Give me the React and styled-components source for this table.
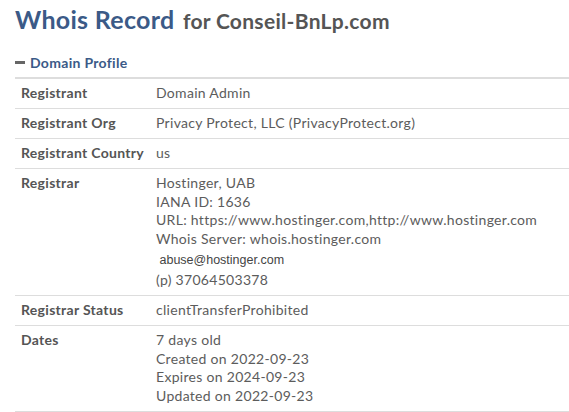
import React from 'react';
import styled, { createGlobalStyle } from 'styled-components';

const GlobalStyle = createGlobalStyle`
	body {
		margin: 0;
		background: #fff;
		font-family: Lato, "Open Sans", sans-serif;
		color: #555;
	}
`;

const Page = styled.div`
	padding: 3px 0 0 15px;
	letter-spacing: 0.3px;
`;

const Title = styled.h1`
	margin: 0;
	font-size: 25px;
	line-height: 32px;
	font-weight: 700;
	color: #3b5a87;
	white-space: nowrap;
`;

const Domain = styled.span`
	font-size: 21px;
	color: #555;
	margin-left: 2px;
`;

const SectionHead = styled.div`
	display: flex;
	align-items: center;
	gap: 5px;
	margin-top: 15px;
	height: 20px;
	font-size: 14px;
	font-weight: 700;
	color: #3b5a87;
`;

const Minus = styled.span`
	width: 10px;
	height: 3px;
	background: #666;
`;

const Table = styled.div`
	margin-top: 5px;
	border-top: 2px solid #ddd;
`;

const Row = styled.div`
	display: grid;
	grid-template-columns: 135px 1fr;
	padding: 5px 6px 5.5px;
	border-bottom: 1px solid #ddd;
	font-size: 14px;
	line-height: 18.5px;
`;

const Label = styled.div`
	font-weight: 700;
	color: #555;
`;

const Value = styled.div`
	color: #5c5c5c;
`;

const Url = styled.div`
	white-space: nowrap;
`;

const Contact = styled.div`
	font-family: "Liberation Sans", Arial, sans-serif;
	font-size: 12.5px;
	letter-spacing: 0;
	line-height: 20px;
	color: #444;
	padding-top: 2px;
`;

const Phone = styled.div`
	line-height: 19.5px;
`;

const rows = [
	{ label: 'Registrant', value: 'Domain Admin' },
	{ label: 'Registrant Org', value: 'Privacy Protect, LLC (PrivacyProtect.org)' },
	{ label: 'Registrant Country', value: 'us' },
];

const App = () => (
	<Page>
		<GlobalStyle />
		<Title>
			Whois Record <Domain>for Conseil-BnLp.com</Domain>
		</Title>
		<SectionHead>
			<Minus />
			Domain Profile
		</SectionHead>
		<Table>
			{rows.map((r) => (
				<Row key={r.label}>
					<Label>{r.label}</Label>
					<Value>{r.value}</Value>
				</Row>
			))}
			<Row>
				<Label>Registrar</Label>
				<Value>
					<div>Hostinger, UAB</div>
					<div>IANA ID: 1636</div>
					<Url>URL: https://www.hostinger.com,http://www.hostinger.com</Url>
					<div>Whois Server: whois.hostinger.com</div>
					<Contact>&nbsp;abuse@hostinger.com</Contact>
					<Phone>(p) 37064503378</Phone>
				</Value>
			</Row>
			<Row>
				<Label>Registrar Status</Label>
				<Value>clientTransferProhibited</Value>
			</Row>
			<Row>
				<Label>Dates</Label>
				<Value>
					<div>7 days old</div>
					<div>Created on 2022-09-23</div>
					<div>Expires on 2024-09-23</div>
					<div>Updated on 2022-09-23</div>
				</Value>
			</Row>
		</Table>
	</Page>
);

export default App;
